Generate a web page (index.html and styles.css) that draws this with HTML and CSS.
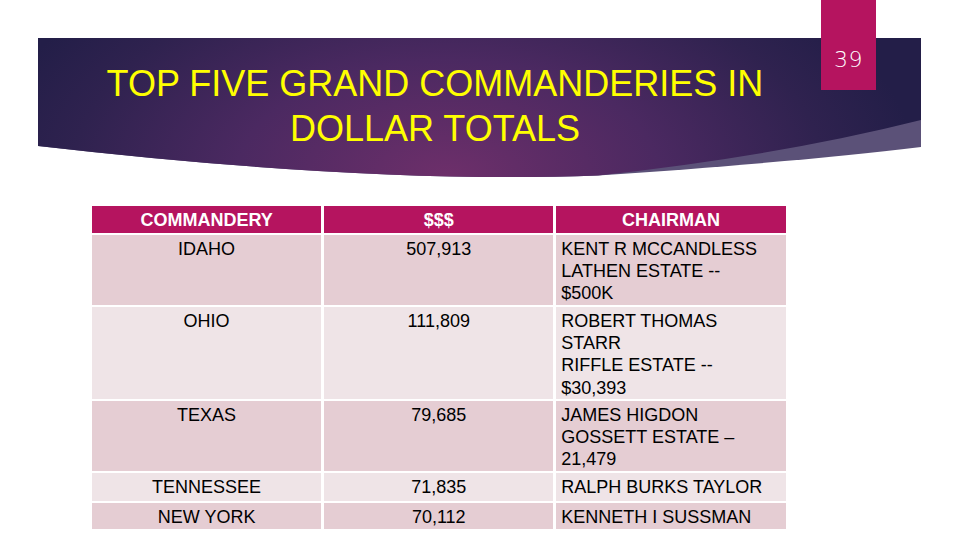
FILE: index.html
```html
<!DOCTYPE html>
<html lang="en">
<head>
<meta charset="utf-8">
<title>Top Five Grand Commanderies</title>
<link rel="stylesheet" href="styles.css">
</head>
<body>
<div class="slide">
  <header class="banner">
    <svg class="banner-bg" viewBox="0 0 883 140" width="883" height="140" aria-hidden="true">
      <defs>
        <radialGradient id="bg" gradientUnits="userSpaceOnUse" cx="410" cy="138" r="470" gradientTransform="translate(410 138) scale(1 0.55) translate(-410 -138)">
          <stop offset="0" stop-color="#6d2f6a"/>
          <stop offset="0.45" stop-color="#4b2961"/>
          <stop offset="0.8" stop-color="#2f224f"/>
          <stop offset="1" stop-color="#231e48"/>
        </radialGradient>
      </defs>
      <path d="M0,0 H883 V109 Q760,124 560,137.5 Q330,146 0,108 Z" fill="#5b5178"/>
      <path d="M0,0 H883 V82 Q740,118 560,137.5 Q330,146 0,108 Z" fill="url(#bg)"/>
    </svg>
    <h1 class="title">TOP FIVE GRAND COMMANDERIES IN<br>DOLLAR TOTALS</h1>
  </header>
  <div class="page-num">39</div>
  <table class="data">
    <thead>
      <tr class="head">
        <th>COMMANDERY</th>
        <th>$$$</th>
        <th>CHAIRMAN</th>
      </tr>
    </thead>
    <tbody>
      <tr class="odd h69">
        <td class="c">IDAHO</td>
        <td class="c">507,913</td>
        <td>KENT R MCCANDLESS<br>LATHEN ESTATE --<br>$500K</td>
      </tr>
      <tr class="even h92">
        <td class="c">OHIO</td>
        <td class="c">111,809</td>
        <td>ROBERT THOMAS<br>STARR<br>RIFFLE ESTATE --<br>$30,393</td>
      </tr>
      <tr class="odd h69">
        <td class="c">TEXAS</td>
        <td class="c">79,685</td>
        <td>JAMES HIGDON<br>GOSSETT ESTATE –<br>21,479</td>
      </tr>
      <tr class="even h28">
        <td class="c">TENNESSEE</td>
        <td class="c">71,835</td>
        <td>RALPH BURKS TAYLOR</td>
      </tr>
      <tr class="odd h26">
        <td class="c">NEW YORK</td>
        <td class="c">70,112</td>
        <td>KENNETH I SUSSMAN</td>
      </tr>
    </tbody>
  </table>
</div>
</body>
</html>
```

FILE: styles.css
```css
html, body {
  margin: 0;
  padding: 0;
  background: #ffffff;
}

body {
  font-family: "Liberation Sans", Arial, sans-serif;
  color: #000000;
}

.slide {
  position: relative;
  width: 960px;
  height: 540px;
  overflow: hidden;
  background: #ffffff;
}

.banner {
  position: relative;
  margin: 38px 0 0 38px;
  width: 883px;
  height: 140px;
}

.banner-bg {
  position: absolute;
  left: 0;
  top: 0;
  display: block;
}

.title {
  position: relative;
  margin: 0 0 0 62px;
  padding-top: 22.8px;
  width: 670px;
  text-align: center;
  font-weight: normal;
  font-size: 36px;
  line-height: 45px;
  color: #ffff00;
}

.page-num {
  position: absolute;
  top: 0;
  left: 821px;
  width: 55px;
  height: 90px;
  box-sizing: border-box;
  padding-top: 49px;
  background: #b5145f;
  color: #ffffff;
  font-family: "DejaVu Sans", "Liberation Sans", sans-serif;
  font-weight: 200;
  font-size: 22px;
  line-height: 22px;
  letter-spacing: 0.5px;
  text-align: center;
}

.data {
  margin: 26px 0 0 89px;
  width: 699.5px;
  table-layout: fixed;
  border-collapse: separate;
  border-spacing: 3px 2px;
  font-size: 18px;
}

.data th {
  background: #b5145f;
  color: #ffffff;
  font-weight: bold;
  text-align: center;
  vertical-align: middle;
  padding: 0;
  height: 27px;
  line-height: 26px;
}

.data td {
  vertical-align: top;
  text-align: left;
  padding: 2.5px 5px 0;
  line-height: 22.4px;
  box-sizing: border-box;
}

.data td.c {
  text-align: center;
}

.odd td {
  background: #e5cdd3;
}

.even td {
  background: #efe4e7;
}

.h69 { height: 70px; }
.h92 { height: 92px; }
.h28 { height: 28px; }
.h26 { height: 26px; }
```
